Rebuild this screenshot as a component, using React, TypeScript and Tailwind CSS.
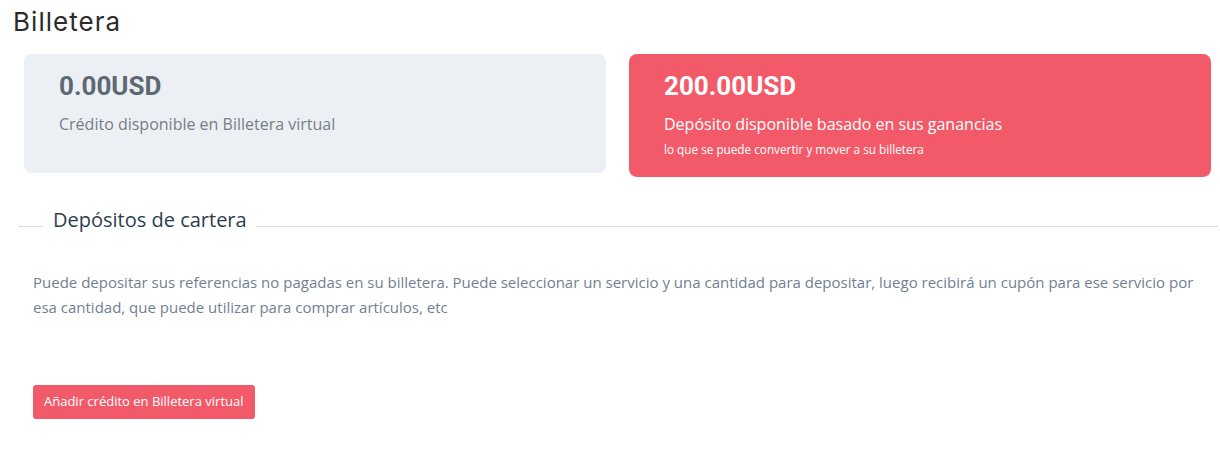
export default function App() {
  return (
    <div className="min-h-screen bg-white font-['Open_Sans',sans-serif]">
      <h1 className="pl-[13px] pt-[6px] font-['Inter',sans-serif] text-[26px] font-normal leading-[32px] tracking-[0.04em] text-[#2b2b2b]">
        Billetera
      </h1>

      <div className="ml-[24px] mt-[16px] grid w-[1187px] grid-cols-2 items-start gap-[23px]">
        <div className="rounded-[8px] bg-[#ecf0f5] pl-[35px] pt-[16px] pb-[38px]">
          <div className="font-['Roboto',sans-serif] text-[26px] font-bold leading-[32px] text-[#5e6873]">0.00USD</div>
          <p className="mt-[11px] text-[16px] leading-[22px] text-[#767e87]">Crédito disponible en Billetera virtual</p>
        </div>
        <div className="rounded-[8px] bg-[#f25a69] pl-[35px] pt-[16px] pb-[20px] text-white">
          <div className="font-['Roboto',sans-serif] text-[26px] font-bold leading-[32px]">200.00USD</div>
          <p className="mt-[11px] text-[16px] leading-[22px]">Depósito disponible basado en sus ganancias</p>
          <p className="mt-[6px] text-[11.75px] leading-[16px]">lo que se puede convertir y mover a su billetera</p>
        </div>
      </div>

      <div className="ml-[18px] mt-[30px] flex w-[1200px] items-end">
        <div className="mb-[6px] h-px w-[25px] bg-[#dcdcdc]" />
        <h2 className="px-[10px] text-[20px] leading-[26px] text-[#2c3e50]">Depósitos de cartera</h2>
        <div className="mb-[6px] h-px flex-1 bg-[#dcdcdc]" />
      </div>

      <p className="ml-[33px] mt-[37px] w-[1172px] text-[15px] leading-[25px] text-[#717f92]">
        Puede depositar sus referencias no pagadas en su billetera. Puede seleccionar un servicio y una cantidad para depositar, luego recibirá un cupón para ese servicio por esa cantidad, que puede utilizar para comprar artículos, etc
      </p>

      <button
        type="button"
        className="ml-[33px] mt-[65px] h-[34px] rounded-[3px] bg-[#f25a69] px-[11px] text-[13px] text-white"
      >
        Añadir crédito en Billetera virtual
      </button>
    </div>
  )
}
